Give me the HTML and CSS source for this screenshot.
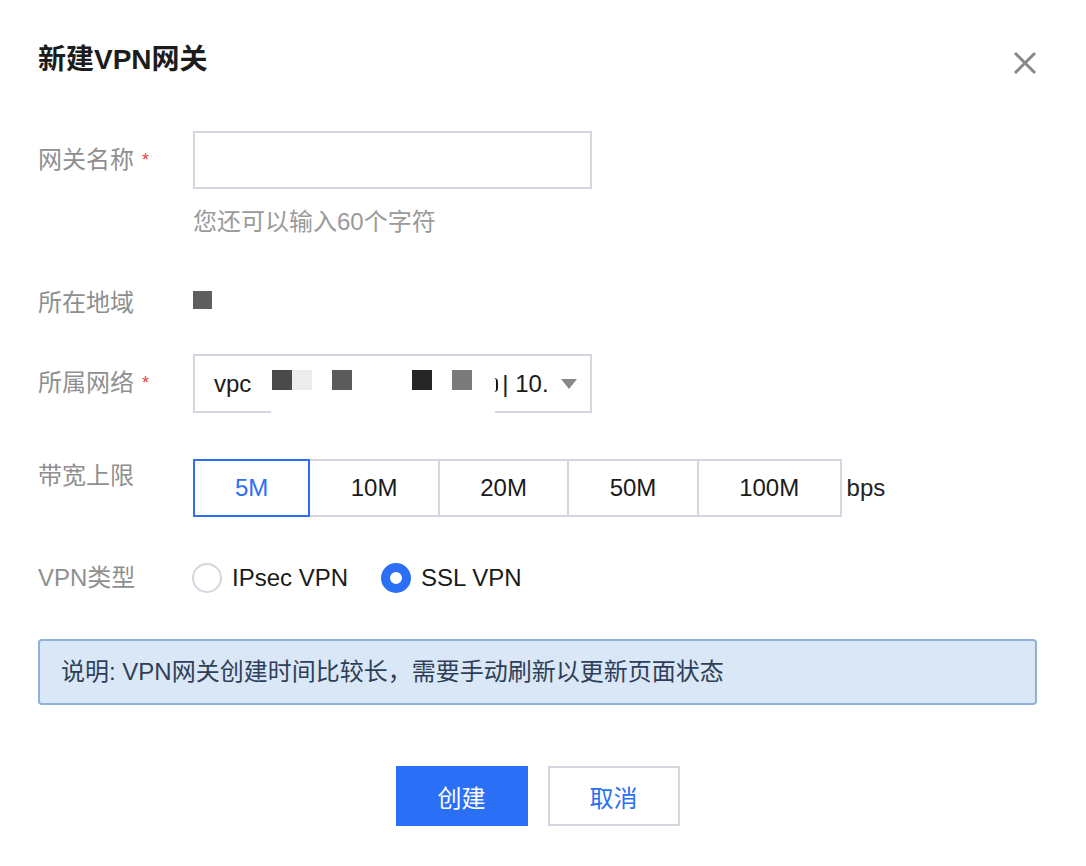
FILE: index.html
```html
<!DOCTYPE html>
<html>
<head>
  <meta charset="utf-8">
  <meta name="viewport" content="width=device-width, initial-scale=1">
  <title>新建VPN网关</title>
  <link rel="stylesheet" href="styles.css">
</head>
<body>
  <div class="dialog">
    <div class="dialog-head">
      <h2 class="dialog-title">新建VPN网关</h2>
      <button class="close-btn" aria-label="关闭">
        <svg width="24" height="24" viewBox="0 0 24 24">
          <path d="M2 2 L22 22 M22 2 L2 22" stroke="#888" stroke-width="3" fill="none"/>
        </svg>
      </button>
    </div>

    <div class="form">
      <div class="form-row">
        <label class="form-label">网关名称<span class="required">*</span></label>
        <div class="form-ctrl">
          <input type="text" class="text-input">
          <p class="hint">您还可以输入60个字符</p>
        </div>
      </div>

      <div class="form-row row-region">
        <label class="form-label">所在地域</label>
        <div class="form-ctrl">
          <span class="mask mask-region"></span>
        </div>
      </div>

      <div class="form-row row-vpc">
        <label class="form-label">所属网络<span class="required">*</span></label>
        <div class="form-ctrl">
          <div class="select">
            <span class="select-text">vpc</span>
            <span class="mask m1"></span><span class="mask m1b"></span>
            <span class="mask m2"></span>
            <span class="mask m3"></span>
            <span class="mask m4"></span>
            <span class="cut"></span>
            <span class="select-text">| 10.</span>
            <span class="arrow"></span>
            <span class="cover"></span>
          </div>
        </div>
      </div>

      <div class="form-row row-bw">
        <label class="form-label">带宽上限</label>
        <div class="form-ctrl bw-ctrl">
          <div class="seg">
            <button class="seg-btn active">5M</button>
            <button class="seg-btn">10M</button>
            <button class="seg-btn">20M</button>
            <button class="seg-btn">50M</button>
            <button class="seg-btn">100M</button>
          </div>
          <span class="unit">bps</span>
        </div>
      </div>

      <div class="form-row row-type">
        <label class="form-label">VPN类型</label>
        <div class="form-ctrl radios">
          <label class="radio"><span class="radio-dot"></span>IPsec VPN</label>
          <label class="radio checked"><span class="radio-dot"></span>SSL VPN</label>
        </div>
      </div>
    </div>

    <div class="notice">说明: VPN网关创建时间比较长，需要手动刷新以更新页面状态</div>

    <div class="dialog-foot">
      <button class="btn btn-primary">创建</button>
      <button class="btn btn-weak">取消</button>
    </div>
  </div>
</body>
</html>
```

FILE: styles.css
```css
body{
  margin: 0;
  padding: 0;
  background: #fff;
  font-family: "Liberation Sans", "Noto Sans CJK SC", sans-serif;
  color: #222;
}

.dialog{
  padding: 40px 49px 0 38px;
}

.dialog-head{
  display: flex;
  justify-content: space-between;
  align-items: center;
  height: 40px;
}

.dialog-title{
  margin: 0;
  font-size: 28px;
  line-height: 40px;
  font-weight: 700;
  color: #1c1c1c;
}

.close-btn{
  border: none;
  background: none;
  padding: 0;
  margin: 6px 0 0 0;
  width: 24px;
  height: 24px;
  cursor: pointer;
}

.close-btn svg{
  display: block;
}

.form{
  margin-top: 51px;
}

.form-row{
  display: flex;
  align-items: flex-start;
}

.form-label{
  width: 155px;
  flex: none;
  font-size: 24px;
  line-height: 34px;
  padding-top: 12px;
  color: #8f8f8f;
}

.required{
  color: #e54545;
  font-size: 18px;
  margin-left: 8px;
  vertical-align: 2px;
}

.text-input{
  display: block;
  box-sizing: border-box;
  width: 399px;
  height: 58px;
  border: 2px solid #d3d7df;
  margin: 0;
  outline: none;
  font-size: 24px;
}

.hint{
  margin: 16px 0 0 0;
  font-size: 24px;
  line-height: 34px;
  color: #9a9a9a;
}

.row-region{
  margin-top: 47px;
}

.row-region .form-label{
  padding-top: 0;
}

.mask{
  display: inline-block;
  width: 20px;
  height: 20px;
  background: #5f5f5f;
}

.mask-region{
  display: block;
  width: 19px;
  height: 18px;
  margin-top: 5px;
}

.row-vpc{
  margin-top: 34px;
}

.select{
  position: relative;
  box-sizing: border-box;
  width: 399px;
  height: 59px;
  border: 2px solid #d3d7df;
  display: flex;
  align-items: center;
  padding-left: 19px;
  font-size: 24px;
  color: #1a1a1a;
}

.select .mask{
  margin-top: -8px;
}

.m1{
  margin-left: 21px;
  background: #4a4a4a;
}

.m1b{
  background: #ececec;
}

.m2{
  margin-left: 20px;
  background: #5b5b5b;
}

.m3{
  margin-left: 60px;
  background: #262626;
}

.m4{
  margin-left: 20px;
  background: #7a7a7a;
}

/* right edge of a glyph hidden by the mask */
.cut{
  width: 4px;
  height: 14px;
  margin: 2px 4px 0 22px;
  border-right: 2px solid #1a1a1a;
  border-radius: 0 8px 8px 0;
  box-sizing: border-box;
}

.arrow{
  width: 0;
  height: 0;
  border-left: 8px solid transparent;
  border-right: 8px solid transparent;
  border-top: 10px solid #888;
  margin-left: 12px;
}

.cover{
  position: absolute;
  left: 75px;
  width: 225px;
  bottom: -4px;
  height: 8px;
  background: #fff;
  border-bottom-left-radius: 6px;
}

.row-bw{
  margin-top: 46px;
}

.row-bw .form-label{
  padding-top: 0;
}

.bw-ctrl{
  display: flex;
  align-items: center;
}

.seg{
  display: flex;
}

.seg-btn{
  position: relative;
  height: 58px;
  padding: 0 40.4px;
  margin: 0 0 0 -2px;
  border: 2px solid #d3d7df;
  background: #fff;
  font-family: inherit;
  font-size: 24px;
  color: #1a1a1a;
  cursor: pointer;
}

.seg-btn:first-child{
  margin-left: 0;
  padding: 0 40px;
}

.seg-btn.active{
  border-color: #2b6ff6;
  color: #2b6ff6;
  z-index: 1;
}

.unit{
  margin-left: 5px;
  font-size: 24px;
}

.row-type{
  margin-top: 44px;
}

.row-type .form-label{
  padding-top: 0;
}

.radios{
  display: flex;
  align-items: center;
  height: 34px;
}

.radio{
  display: flex;
  align-items: center;
  font-size: 24px;
  color: #1a1a1a;
  margin-right: 34px;
  margin-left: -1px;
}

.radio-dot{
  box-sizing: border-box;
  width: 30px;
  height: 30px;
  border-radius: 50%;
  border: 2px solid #d3d7df;
  background: #fff;
  margin-right: 10px;
}

.radio.checked .radio-dot{
  border: 9px solid #2b6ff6;
}

.notice{
  margin-top: 44px;
  height: 66px;
  box-sizing: border-box;
  border: 2px solid #8fb0da;
  border-radius: 4px;
  background: #d9e7f6;
  padding-left: 21px;
  font-size: 24px;
  line-height: 62px;
  color: #2f3f58;
}

.dialog-foot{
  display: flex;
  justify-content: center;
  gap: 20px;
  margin-top: 61px;
}

.btn{
  box-sizing: border-box;
  width: 132px;
  height: 60px;
  font-family: inherit;
  font-size: 24px;
  cursor: pointer;
}

.btn-primary{
  border: none;
  background: #2b6ff6;
  color: #fff;
}

.btn-weak{
  border: 2px solid #d3d7df;
  background: #fff;
  color: #2b6ff6;
}
```
